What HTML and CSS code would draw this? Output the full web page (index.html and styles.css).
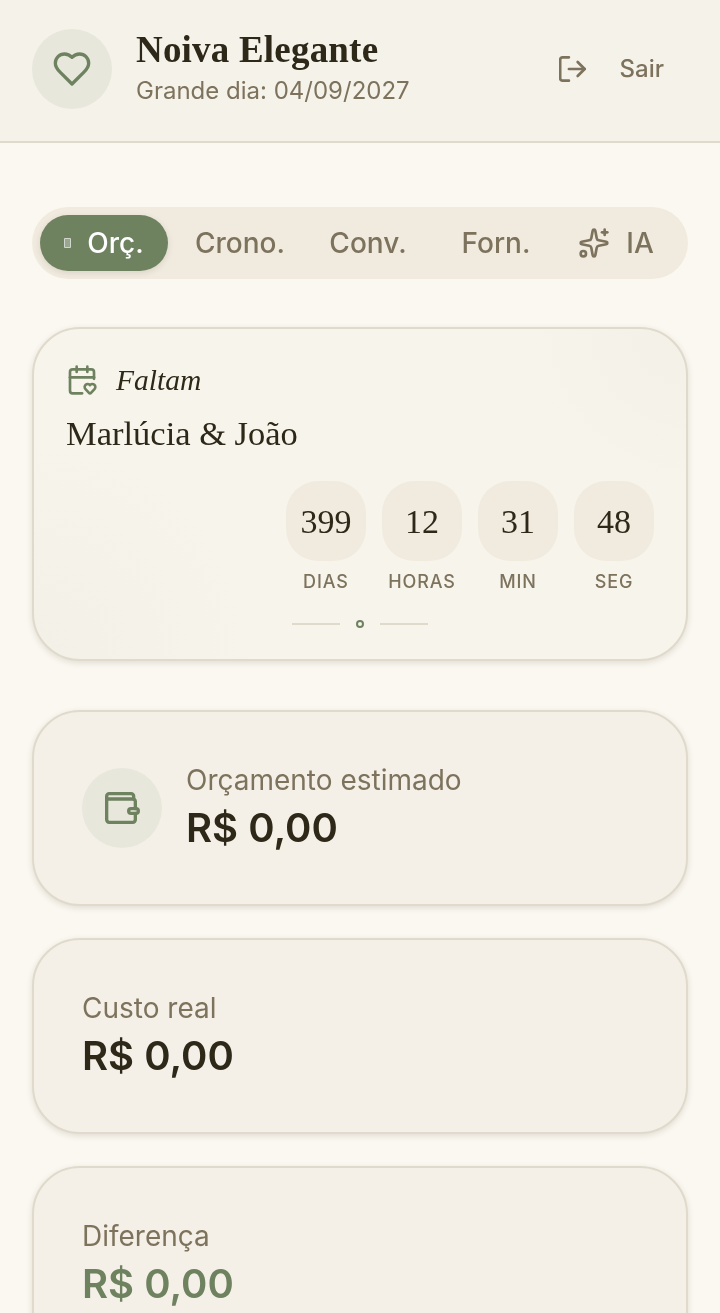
FILE: index.html
```html
<!DOCTYPE html>
<html lang="pt-BR">
<head>
    <meta charset="UTF-8">
    <meta name="viewport" content="width=device-width, initial-scale=1.0">
    <title>Noiva Elegante</title>
    <link rel="stylesheet" href="styles.css">
</head>
<body>
    <header class="header">
        <div class="brand">
            <div class="brand-icon">
                <svg class="icon icon-40" viewBox="0 0 24 24"><path d="M19 14c1.490-1.460 3-3.210 3-5.500A5.500 5.500 0 0 0 16.500 3c-1.760 0-3 .5-4.500 2-1.500-1.500-2.740-2-4.500-2A5.500 5.500 0 0 0 2 8.500c0 2.300 1.500 4.050 3 5.500l7 7Z"/></svg>
            </div>
            <div class="brand-text">
                <h1 class="brand-title">Noiva Elegante</h1>
                <p class="brand-date">Grande dia: 04/09/2027</p>
            </div>
        </div>
        <button class="logout">
            <svg class="icon icon-28 icon-heavy" viewBox="0 0 24 24"><path d="M8.500 22H3a2 2 0 0 1-2-2V4a2 2 0 0 1 2-2h5.500"/><path d="m16 18 6-6-6-6"/><path d="M22 12H8.500"/></svg>
            <span>Sair</span>
        </button>
    </header>

    <main class="content">
        <nav class="tabs">
            <button class="tab tab-active"><span class="tab-glyph"></span>Orç.</button>
            <button class="tab"><span class="tab-slot"></span>Crono.</button>
            <button class="tab"><span class="tab-slot"></span>Conv.</button>
            <button class="tab"><span class="tab-slot"></span>Forn.</button>
            <button class="tab">
                <svg class="icon icon-32" viewBox="0 0 24 24"><path d="M11.017 2.814a1 1 0 0 1 1.966 0l1.051 5.558a2 2 0 0 0 1.594 1.594l5.558 1.051a1 1 0 0 1 0 1.966l-5.558 1.051a2 2 0 0 0-1.594 1.594l-1.051 5.558a1 1 0 0 1-1.966 0l-1.051-5.558a2 2 0 0 0-1.594-1.594l-5.558-1.051a1 1 0 0 1 0-1.966l5.558-1.051a2 2 0 0 0 1.594-1.594z"/><path d="M20 2v4"/><path d="M22 4h-4"/><circle cx="4" cy="20" r="2"/></svg>
                IA
            </button>
        </nav>

        <section class="countdown">
            <div class="countdown-head">
                <svg class="icon icon-32 icon-green" viewBox="0 0 24 24"><path d="M12.127 22H5a2 2 0 0 1-2-2V6a2 2 0 0 1 2-2h14a2 2 0 0 1 2 2v5.125"/><path d="M14.620 18.800A2.250 2.250 0 1 1 18 15.836a2.250 2.250 0 1 1 3.380 2.966l-2.626 2.856a.998.998 0 0 1-1.507 0z"/><path d="M16 2v4"/><path d="M3 10h18"/><path d="M8 2v4"/></svg>
                <span class="countdown-label">Faltam</span>
            </div>
            <h2 class="countdown-names">Marlúcia &amp; João</h2>
            <div class="timer">
                <div class="timer-unit"><div class="timer-box">399</div><span class="timer-label">Dias</span></div>
                <div class="timer-unit"><div class="timer-box">12</div><span class="timer-label">Horas</span></div>
                <div class="timer-unit"><div class="timer-box">31</div><span class="timer-label">Min</span></div>
                <div class="timer-unit"><div class="timer-box">48</div><span class="timer-label">Seg</span></div>
            </div>
            <div class="ornament">
                <span class="ornament-line"></span>
                <span class="ornament-dot"></span>
                <span class="ornament-line"></span>
            </div>
        </section>

        <section class="stat-card">
            <div class="stat-icon">
                <svg class="icon icon-40 icon-green" viewBox="0 0 24 24"><path d="M19 6.600V4.900a1.500 1.500 0 0 0-1.500-1.500H4.300a1.500 1.500 0 0 0-1.500 1.500v14.200a1.500 1.500 0 0 0 1.500 1.500h14.200a1.500 1.500 0 0 0 1.500-1.500v-3.900"/><path d="M2.800 6.600h15.700a1.500 1.500 0 0 1 1.500 1.500v4.300"/><rect x="16" y="12.400" width="5.800" height="2.800" rx="1.400"/></svg>
            </div>
            <div>
                <p class="stat-label">Orçamento estimado</p>
                <p class="stat-value">R$ 0,00</p>
            </div>
        </section>

        <section class="stat-card">
            <div>
                <p class="stat-label">Custo real</p>
                <p class="stat-value">R$ 0,00</p>
            </div>
        </section>

        <section class="stat-card">
            <div>
                <p class="stat-label">Diferença</p>
                <p class="stat-value stat-value-green">R$ 0,00</p>
            </div>
        </section>
    </main>
</body>
</html>
```
FILE: styles.css
```css
* {
    margin: 0;
    padding: 0;
    box-sizing: border-box;
}

body {
    font-family: 'Inter', 'Liberation Sans', sans-serif;
    background: #fbf8f1;
    color: #2e2818;
}

.icon {
    fill: none;
    stroke: currentColor;
    stroke-width: 2;
    stroke-linecap: round;
    stroke-linejoin: round;
    flex-shrink: 0;
}

.icon-28 { width: 28px; height: 28px; }
.icon-32 { width: 32px; height: 32px; }
.icon-40 { width: 40px; height: 40px; }
.icon-green { color: #6f8260; }
.icon-heavy { stroke-width: 2.3; }

/* Cabecalho */
.header {
    height: 143px;
    padding: 0 32px 4px;
    display: flex;
    align-items: center;
    justify-content: space-between;
    background: #f5f2ea;
    border-bottom: 2px solid #dfdacb;
    will-change: transform;
}

.brand {
    display: flex;
    align-items: center;
    gap: 24px;
}

.brand-icon {
    width: 80px;
    height: 80px;
    border-radius: 50%;
    background: #e7e7dc;
    color: #6f8260;
    display: flex;
    align-items: center;
    justify-content: center;
}

.brand-title {
    font-family: 'Liberation Serif', serif;
    font-size: 37px;
    font-weight: 700;
    line-height: 38px;
    letter-spacing: 0.2px;
    margin-bottom: 6px;
}

.brand-date {
    font-size: 24px;
    line-height: 32px;
    color: #7d725c;
}

.logout {
    display: flex;
    align-items: center;
    gap: 33px;
    padding: 0 24px 0 0;
    border: none;
    background: none;
    font-family: inherit;
    font-size: 24px;
    font-weight: 500;
    color: #7d725c;
}

/* Abas */
.content {
    padding: 64px 32px 0;
    will-change: transform;
}

.tabs {
    display: grid;
    grid-template-columns: repeat(5, 1fr);
    padding: 8px;
    height: 72px;
    border-radius: 36px;
    background: #f1ebdf;
    margin-bottom: 48px;
}

.tab {
    display: flex;
    align-items: center;
    justify-content: center;
    gap: 16px;
    border: none;
    background: none;
    border-radius: 28px;
    font-family: inherit;
    font-size: 28px;
    font-weight: 500;
    color: #7d725c;
}

.tab-active {
    background: #6f8260;
    color: #fff;
    box-shadow: 0 2px 6px rgba(46, 40, 24, 0.12);
}

.tab-glyph {
    width: 7px;
    height: 10px;
    border: 1px solid rgba(255, 255, 255, 0.55);
    background: rgba(255, 255, 255, 0.3);
    border-radius: 1px;
}

.tab-slot {
    width: 0;
}

/* Contagem */
.countdown {
    height: 334px;
    padding: 35px 32px 0;
    border: 2px solid #dfdacb;
    border-radius: 48px;
    background:
        radial-gradient(circle at 100% 0%, #f3f0e8 0, rgba(243, 240, 232, 0) 22%),
        radial-gradient(circle at 0% 100%, #f3f0e8 0, rgba(243, 240, 232, 0) 30%),
        #f7f4ec;
    box-shadow: 0 2px 6px rgba(46, 40, 24, 0.13);
    margin-bottom: 49px;
}

.countdown-head {
    display: flex;
    align-items: center;
    gap: 18px;
    height: 32px;
    margin-bottom: 15px;
}

.countdown-label {
    font-family: 'Liberation Serif', serif;
    font-style: italic;
    font-size: 29.5px;
    color: #2e2818;
}

.countdown-names {
    font-family: 'Liberation Serif', serif;
    font-size: 34.5px;
    font-weight: 400;
    line-height: 44px;
}

.timer {
    display: flex;
    justify-content: flex-end;
    gap: 16px;
    margin-top: 26px;
}

.timer-unit {
    width: 80px;
    display: flex;
    flex-direction: column;
    align-items: center;
    gap: 9px;
}

.timer-box {
    width: 80px;
    height: 80px;
    padding-top: 2px;
    border-radius: 32px;
    background: #f1ebdf;
    display: flex;
    align-items: center;
    justify-content: center;
    font-family: 'Liberation Serif', serif;
    font-size: 34px;
}

.timer-label {
    font-size: 18px;
    line-height: 24px;
    font-weight: 500;
    letter-spacing: 0.9px;
    text-transform: uppercase;
    color: #7d725c;
}

.ornament {
    display: flex;
    align-items: center;
    justify-content: center;
    gap: 16px;
    margin-top: 26px;
}

.ornament-line {
    width: 48px;
    height: 2px;
    background: #dfdacb;
}

.ornament-dot {
    width: 8px;
    height: 8px;
    border: 2px solid #6f8260;
    border-radius: 50%;
}

/* Cartoes de valores */
.stat-card {
    height: 196px;
    padding: 0 48px;
    display: flex;
    align-items: center;
    gap: 24px;
    border: 2px solid #dfdacb;
    border-radius: 48px;
    background: #f4f0e8;
    box-shadow: 0 2px 6px rgba(46, 40, 24, 0.13);
    margin-bottom: 32px;
}

.stat-icon {
    width: 80px;
    height: 80px;
    border-radius: 50%;
    background: #e7e7dc;
    display: flex;
    align-items: center;
    justify-content: center;
}

.stat-label {
    font-size: 28px;
    line-height: 32px;
    margin-bottom: 8px;
    color: #7d725c;
}

.stat-value {
    font-size: 40px;
    line-height: 48px;
    font-weight: 600;
}

.stat-value-green {
    color: #6f8260;
}
```
